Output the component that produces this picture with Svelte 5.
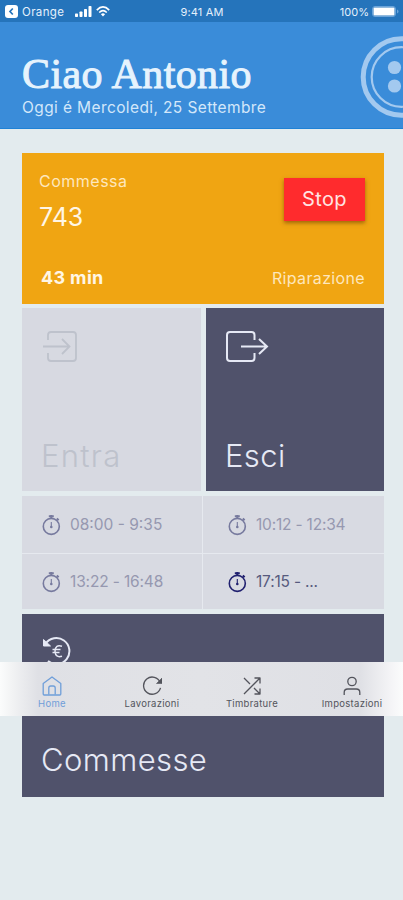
<script lang="ts">
	const shifts = [
		{ time: '08:00 - 9:35', active: false },
		{ time: '10:12 - 12:34', active: false },
		{ time: '13:22 - 16:48', active: false },
		{ time: '17:15 - ...', active: true }
	];

	const tabs = [
		{ label: 'Home', icon: 'home' },
		{ label: 'Lavorazioni', icon: 'reload' },
		{ label: 'Timbrature', icon: 'shuffle' },
		{ label: 'Impostazioni', icon: 'user' }
	];
</script>

<div class="screen">
	<div class="status">
		<div class="carrier">
			<svg width="13" height="13" viewBox="0 0 13 13">
				<rect width="13" height="13" rx="3" fill="#fff" />
				<path d="M7.8 3.5 5 6.5l2.8 3" fill="none" stroke="#2373bb" stroke-width="1.7" />
			</svg>
			<span>Orange</span>
			<svg class="signal" width="17" height="11" viewBox="0 0 17 11" fill="#fff">
				<rect y="7.5" width="3" height="3.5" rx=".7" />
				<rect x="4.5" y="5.5" width="3" height="5.5" rx=".7" />
				<rect x="9" y="3" width="3" height="8" rx=".7" />
				<rect x="13.5" width="3" height="11" rx=".7" />
			</svg>
			<svg class="wifi" width="14" height="11" viewBox="0 0 14 11" fill="none" stroke="#fff">
				<path d="M.8 4.1Q7-2.2 13.2 4.1" stroke-width="1.7" />
				<path d="M3.2 6.5Q7 2.8 10.8 6.5" stroke-width="1.6" />
				<path d="M7 10.4 4.9 8.2Q7 6.5 9.1 8.2Z" fill="#fff" stroke="none" />
			</svg>
		</div>
		<span class="clock">9:41 AM</span>
		<div class="battery">
			<span>100%</span>
			<svg width="27" height="11" viewBox="0 0 27 11">
				<rect x=".5" y=".5" width="23" height="10" rx="2.5" fill="none" stroke="#6ba4da" />
				<rect x="1.5" y="1.5" width="21" height="8" rx="1" fill="#fff" />
				<path d="M25 3.6q1.5.5 1.5 1.9T25 7.4z" fill="#6ba4da" />
			</svg>
		</div>
	</div>

	<header>
		<div>
			<h1>Ciao Antonio</h1>
			<p>Oggi é Mercoledi, 25 Settembre</p>
		</div>
		<svg class="button-logo" width="43" height="84" viewBox="0 0 43 84" fill="none" stroke="#a3c9ef">
			<circle cx="41.5" cy="42" r="38.3" stroke-width="5" />
			<circle cx="41.5" cy="42" r="29.8" stroke-width="2.2" />
			<g fill="#a3c9ef" stroke="none">
				<circle cx="34.5" cy="32.5" r="6.6" />
				<circle cx="34.5" cy="51" r="6.6" />
				<circle cx="52.5" cy="32.5" r="6.6" />
				<circle cx="52.5" cy="51" r="6.6" />
			</g>
		</svg>
	</header>

	<main>
		<section class="job">
			<div class="job-row">
				<div>
					<div class="job-label">Commessa</div>
					<div class="job-number">743</div>
				</div>
				<button class="stop">Stop</button>
			</div>
			<div class="job-row job-foot">
				<strong>43 min</strong>
				<span>Riparazione</span>
			</div>
		</section>

		<div class="actions">
			<div class="tile disabled">
				<svg width="44" height="32" viewBox="0 0 44 32" fill="none" stroke="currentColor" stroke-width="1.8">
					<path d="M6 9V4q0-3 3-3h22q3 0 3 3v23q0 3-3 3H9q-3 0-3-3v-5" />
					<path d="M1 15.5h26M20 8l7.5 7.5L20 23" />
				</svg>
				<span>Entra</span>
			</div>
			<div class="tile">
				<svg width="44" height="32" viewBox="0 0 44 32" fill="none" stroke="currentColor" stroke-width="2">
					<path d="M28.5 9V4q0-3-3-3H4Q1 1 1 4v23q0 3 3 3h21.500q3 0 3-3v-5" />
					<path d="M15 15.5h26M33 8l8 7.5-8 7.5" />
				</svg>
				<span>Esci</span>
			</div>
		</div>

		<div class="shifts">
			{#each shifts as shift}
				<div class="shift" class:active={shift.active}>
					<svg width="20" height="22" viewBox="0 0 20 22" fill="none" stroke="currentColor">
						<circle cx="9.3" cy="12.4" r="8" stroke-width="1.6" />
						<path d="M6.8 2.3h5M9.3 1v3.500M14.800 4.500l1.800 1.800" stroke-width="2" />
						<path d="M9.3 8v4" stroke-width="1.1" />
						<circle cx="9.3" cy="13" r="1.3" fill="currentColor" stroke="none" />
					</svg>
					<span>{shift.time}</span>
				</div>
			{/each}
		</div>

		<section class="tile orders">
			<svg width="32" height="32" viewBox="0 0 32 32" fill="none" stroke="currentColor" stroke-width="2">
				<path d="M3.500 7A13 13 0 1 1 6 24" />
				<path d="M1.500 2.500v6.500h7z" fill="currentColor" stroke-width="1" />
				<path d="M20 9.200q-6.600-2.200-7 5 .4 7 7 5M10.500 12.500h8M10.500 15.500h7" stroke-width="1.5" />
			</svg>
			<span>Commesse</span>
		</section>
	</main>

	<nav>
		{#each tabs as tab}
			<div class="tab" class:current={tab.icon === 'home'}>
				<svg width="20" height="20" viewBox="0 0 20 20" fill="none" stroke="currentColor" stroke-width="1.3" stroke-linejoin="round">
					{#if tab.icon === 'home'}
						<path d="M1.2 7.6 10 1l8.800 6.600V18q0 1-1 1H2.200q-1 0-1-1z" />
						<path d="M6.800 18.500V12q0-2 2-2h2.400q2 0 2 2v6.500" />
					{:else if tab.icon === 'reload'}
						<path d="M18.500 11.800A8.600 8.600 0 1 1 18.200 6.500" />
						<path d="M20 2v5.500h-5.500z" fill="currentColor" stroke-width=".6" />
					{:else if tab.icon === 'shuffle'}
						<path d="M2 18 17.500 2.500M12.500 2H18v5.500M2 2l6 6M12 12l5.500 5.500M12.500 18H18v-5.500" />
					{:else}
						<circle cx="10" cy="5.500" r="4.200" />
						<path d="M2.200 19v-2.500q0-3.500 3.500-3.500h8.600q3.500 0 3.500 3.500V19" />
					{/if}
				</svg>
				<span>{tab.label}</span>
			</div>
		{/each}
	</nav>
</div>

<style>
	:global(body) {
		background: #e3ebee;
	}

	.screen {
		position: relative;
		width: 403px;
		height: 900px;
		overflow: hidden;
		background: #e3ebee;
		font-family: Inter, 'Liberation Sans', sans-serif;
	}

	.status {
		display: grid;
		grid-template-columns: 1fr auto 1fr;
		align-items: center;
		box-sizing: border-box;
		height: 22px;
		padding: 1px 4px 0 5px;
		background: #2574bb;
		font-size: 11.5px;
		color: #e4f0fb;
	}

	.carrier,
	.battery {
		display: flex;
		align-items: center;
	}

	.carrier span {
		margin-left: 4px;
		letter-spacing: 0.35px;
	}

	.signal {
		margin-left: 11px;
	}

	.wifi {
		margin-left: 4px;
	}

	.clock {
		font-size: 11px;
		letter-spacing: 0.15px;
	}

	.battery {
		justify-content: flex-end;
		gap: 3px;
		font-size: 11px;
	}

	header {
		display: flex;
		justify-content: space-between;
		box-sizing: border-box;
		height: 107px;
		padding: 13px 0 0 22px;
		border-bottom: 1px solid #1f82d6;
		background: #3a8cd9;
		color: #e6f3fd;
	}

	h1 {
		margin: 15px 0 0;
		font-family: 'Liberation Serif', serif;
		font-size: 42px;
		font-weight: 400;
		line-height: 48px;
		letter-spacing: 0.4px;
		-webkit-text-stroke: 1px currentColor;
	}

	p {
		margin: 0;
		font-size: 15.5px;
		line-height: 20px;
		letter-spacing: 0.39px;
		color: #d3e7fa;
	}

	main {
		display: flex;
		flex-direction: column;
		width: 362px;
		padding: 24px 0 0 22px;
	}

	.job {
		display: flex;
		flex-direction: column;
		justify-content: space-between;
		box-sizing: border-box;
		height: 151px;
		padding: 17px 19px 15px 17px;
		background: #f0a512;
		color: #fff6e5;
	}

	.job-row {
		display: flex;
		justify-content: space-between;
	}

	.job-label {
		font-size: 16px;
		line-height: 22px;
		letter-spacing: 0.5px;
		color: #fee7bd;
	}

	.job-number {
		margin-top: 11px;
		font-size: 25px;
		line-height: 28px;
	}

	.stop {
		width: 81px;
		height: 43px;
		margin-top: 8px;
		padding: 0 0 2px;
		border: 0;
		background: #ff2b2d;
		box-shadow: 0 2px 4px rgb(90 50 0 / 55%);
		font: inherit;
		font-size: 20px;
		letter-spacing: 0.4px;
		color: #ffe4e2;
	}

	.job-foot {
		align-items: center;
		font-size: 16px;
		line-height: 22px;
		letter-spacing: 0.35px;
		color: #fee7bd;
	}

	.job-foot strong {
		padding-left: 2px;
		font-size: 18px;
		color: #fff6e5;
	}

	.actions {
		display: grid;
		grid-template-columns: 179px 178px;
		gap: 5px;
		margin-top: 4px;
	}

	.tile {
		display: flex;
		flex-direction: column;
		justify-content: space-between;
		box-sizing: border-box;
		height: 183px;
		padding: 23px 20px 15px;
		background: #50526b;
		font-size: 31px;
		font-weight: 300;
		line-height: 40px;
		letter-spacing: 0.4px;
		color: #e6e9f5;
	}

	.disabled {
		background: #d7d9e1;
		letter-spacing: 1.3px;
		color: #bec2cc;
	}

	.tile span {
		margin-left: -1px;
	}

	.shifts {
		display: grid;
		grid-template-columns: 180px 181px;
		grid-template-rows: 57px 55px;
		gap: 1px;
		margin-top: 5px;
		background: #e6e9ef;
	}

	.shift {
		display: flex;
		align-items: center;
		gap: 8px;
		padding-left: 20px;
		background: #d8dae2;
		font-size: 15.5px;
		color: #9698b0;
	}

	.shift:nth-child(even) {
		padding-left: 25px;
		letter-spacing: -0.2px;
	}

	.shift:nth-child(3) {
		letter-spacing: -0.15px;
	}

	.shift svg {
		color: #777a9e;
	}

	.shift.active {
		color: #575a7e;
	}

	.shift.active svg {
		color: #20206f;
	}

	.orders {
		margin-top: 5px;
		padding-bottom: 17px;
	}

	nav {
		position: absolute;
		top: 662px;
		left: 0;
		display: grid;
		grid-template-columns: repeat(4, 100px);
		box-sizing: border-box;
		width: 403px;
		height: 54px;
		padding: 14px 0 0 2px;
		background: linear-gradient(90deg, #fbfcfc, #f2f3f4 12px, #dfe0e5 38px, #e2e3e7 200px, #dfe0e5 360px, #f5f5f7 392px, #fbfcfc);
	}

	.tab {
		display: flex;
		flex-direction: column;
		align-items: center;
		font-size: 9.5px;
		line-height: 14px;
		letter-spacing: 0.3px;
		color: #53545c;
	}

	.tab span {
		margin-top: 1px;
	}

	.current {
		color: #6f9ed9;
	}
</style>
